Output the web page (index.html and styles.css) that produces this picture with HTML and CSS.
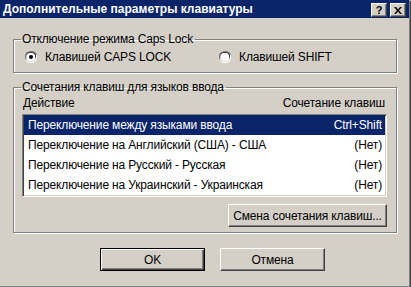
FILE: index.html
```html
<!DOCTYPE html>
<html lang="ru">
<head>
    <meta charset="UTF-8">
    <meta name="viewport" content="width=device-width, initial-scale=1.0">
    <title>Дополнительные параметры клавиатуры</title>
    <link rel="stylesheet" href="styles.css">
</head>
<body>
    <div class="window">

        <!-- заголовок окна -->
        <div class="titlebar">
            <span class="title">Дополнительные параметры клавиатуры</span>
            <div class="caption-btns">
                <div class="cap-btn help">?</div>
                <div class="cap-btn">
                    <svg width="8" height="7" viewBox="0 0 8 7">
                        <path d="M0 0h2l2 2.5L6 0h2L5 3.5 8 7H6L4 4.5 2 7H0l3-3.5z" fill="#000"/>
                    </svg>
                </div>
            </div>
        </div>

        <div class="content">
            <fieldset class="group caps-group">
                <legend>Отключение режима Caps Lock</legend>
                <div class="radios">
                    <label class="radio">
                        <svg class="radio-box" width="12" height="12" viewBox="0 0 12 12">
                            <path d="M4 0h4l2 1 1 1 1 2v4h-1V4l-1-2-2-1H4L2 1 1 2 0 4v4h1z" fill="#808080"/>
                            <circle cx="6" cy="6" r="4.5" fill="#fff"/>
                            <path d="M4 1h4l2 1 1 2v4l-1-2V4L8 2H4L2 3 1 4v3L1 4l1-2z" fill="#404040"/>
                            <path d="M12 4v4l-1 2-1 1-2 1H4l-2-1-1-1h1l2 1h4l2-1 1-2V4z" fill="#fff"/>
                            <circle cx="6" cy="6" r="2" fill="#000"/>
                        </svg>
                        Клавишей CAPS LOCK
                    </label>
                    <label class="radio second">
                        <svg class="radio-box" width="12" height="12" viewBox="0 0 12 12">
                            <path d="M4 0h4l2 1 1 1 1 2v4h-1V4l-1-2-2-1H4L2 1 1 2 0 4v4h1z" fill="#808080"/>
                            <circle cx="6" cy="6" r="4.5" fill="#fff"/>
                            <path d="M4 1h4l2 1 1 2v4l-1-2V4L8 2H4L2 3 1 4v3L1 4l1-2z" fill="#404040"/>
                            <path d="M12 4v4l-1 2-1 1-2 1H4l-2-1-1-1h1l2 1h4l2-1 1-2V4z" fill="#fff"/>
                        </svg>
                        Клавишей SHIFT
                    </label>
                </div>
            </fieldset>

            <fieldset class="group keys-group">
                <legend>Сочетания клавиш для языков ввода</legend>
                <div class="list-head">
                    <span>Действие</span>
                    <span>Сочетание клавиш</span>
                </div>
                <div class="listbox">
                    <div class="row selected"><span>Переключение между языками ввода</span><span>Ctrl+Shift</span></div>
                    <div class="row"><span>Переключение на Английский (США) - США</span><span>(Нет)</span></div>
                    <div class="row"><span>Переключение на Русский - Русская</span><span>(Нет)</span></div>
                    <div class="row"><span>Переключение на Украинский - Украинская</span><span>(Нет)</span></div>
                </div>
                <div class="change-row">
                    <button class="btn change-btn">Смена сочетания клавиш...</button>
                </div>
            </fieldset>

            <!-- кнопки диалога -->
            <div class="dialog-btns">
                <button class="btn default">OK</button>
                <button class="btn">Отмена</button>
            </div>
        </div>
    </div>
</body>
</html>
```

FILE: styles.css
```css
/* классическое окно Windows */
body {
    margin: 0;
    font-family: 'Liberation Sans', Arial, sans-serif;
    font-size: 12px;
    letter-spacing: -0.15px;
    color: #000;
    background: #d4d0c8;
    white-space: nowrap;
}

.window {
    width: 409px;
    height: 286px;
    background: #d4d0c8;
    border-right: 1px solid #808080;
    border-bottom: 1px solid #808080;
    box-shadow: 1px 1px 0 #404040;
}

/* заголовок */
.titlebar {
    height: 18px;
    background: #0a246a;
    display: flex;
    align-items: center;
    justify-content: space-between;
    padding: 0 3px 0 3px;
}

.title {
    color: #fff;
    font-weight: bold;
    font-size: 12px;
    letter-spacing: 0;
}

.caption-btns {
    display: flex;
    gap: 3px;
    margin-top: 2px;
}

.cap-btn {
    width: 14px;
    height: 12px;
    background: #d4d0c8;
    border-top: 1px solid #fff;
    border-left: 1px solid #fff;
    border-right: 1px solid #404040;
    border-bottom: 1px solid #404040;
    box-shadow: inset -1px -1px 0 #808080;
    display: flex;
    align-items: center;
    justify-content: center;
    font-weight: bold;
    font-size: 11px;
    line-height: 12px;
}

/* основная часть */
.content {
    padding: 14px 12px 0 13px;
}

.group {
    margin: 0;
    padding: 0 9px 5px 8px;
    border: 1px solid #808080;
    box-shadow: inset 1px 1px 0 #fff, 1px 1px 0 #fff;
}

.group legend {
    padding: 0 2px 0 1px;
    margin-left: -1px;
    line-height: 15px;
}

.caps-group {
    padding-bottom: 6px;
}

.radios {
    display: flex;
    padding: 1px 0 0 3px;
    height: 18px;
    align-items: center;
}

.radio {
    display: flex;
    align-items: center;
    gap: 8px;
    flex-shrink: 0;
}

.radio.second {
    margin-left: 48px;
}

.radio-box {
    display: block;
}

.keys-group {
    margin-top: 7px;
}

.list-head {
    display: flex;
    justify-content: space-between;
    padding: 1px 2px 0 1px;
    height: 16px;
    line-height: 15px;
}

.listbox {
    margin-top: 2px;
    background: #fff;
    border-top: 1px solid #808080;
    border-left: 1px solid #808080;
    border-right: 1px solid #fff;
    border-bottom: 1px solid #fff;
    box-shadow: inset 1px 1px 0 #404040, inset -1px -1px 0 #d4d0c8;
    padding: 0 1px 1px 1px;
}

.row {
    display: flex;
    justify-content: space-between;
    height: 20px;
    line-height: 20px;
    padding: 0 3px 0 4px;
}

.row.selected {
    background: #0a246a;
    color: #fff;
}

.change-row {
    display: flex;
    justify-content: flex-end;
    margin-top: 7px;
}

/* кнопки */
.btn {
    font-family: inherit;
    font-size: 12px;
    letter-spacing: -0.15px;
    color: #000;
    background: #d4d0c8;
    border-top: 1px solid #fff;
    border-left: 1px solid #fff;
    border-right: 1px solid #404040;
    border-bottom: 1px solid #404040;
    box-shadow: inset -1px -1px 0 #808080;
    padding: 0;
    height: 23px;
    white-space: nowrap;
}

.change-btn {
    width: 159px;
}

.dialog-btns {
    display: flex;
    gap: 15px;
    padding: 15px 0 0 87px;
}

.dialog-btns .btn {
    width: 105px;
}

.btn.default {
    border: 1px solid #000;
    box-shadow: inset 1px 1px 0 #fff, inset -1px -1px 0 #404040, inset -2px -2px 0 #808080;
}
```
